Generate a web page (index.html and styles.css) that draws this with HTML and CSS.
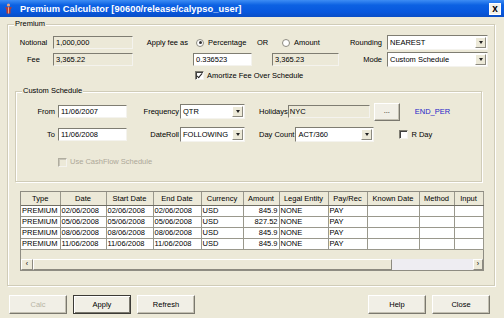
FILE: index.html
```html
<!DOCTYPE html>
<html lang="en">
<head>
    <meta charset="UTF-8">
    <title>Premium Calculator</title>
    <link rel="stylesheet" href="styles.css">
</head>
<body>
<div class="window">
    <div class="titlebar">
        <svg class="app-icon" viewBox="0 0 9 11" width="9" height="11">
            <circle cx="4.5" cy="2" r="1.6" fill="#e8a080"/>
            <path d="M1 4.2 L8 4.2 L6.5 6.5 L6.5 10.5 L2.5 10.5 L2.5 6.5 Z" fill="#c0392b"/>
            <path d="M4.5 4.2 L4.5 10.5" stroke="#f2c6a0" stroke-width="0.8"/>
        </svg>
        <span class="title">Premium Calculator [90600/release/calypso_user]</span>
        <span class="close-btn">x</span>
    </div>

    <div class="content">
        <div class="group premium">
            <div class="group-title">Premium</div>

            <div class="prem-grid">
                <span class="lbl center">Notional</span>
                <span class="field ro">1,000,000</span>
                <span class="lbl right">Apply fee as</span>
                <span class="opt pct"><span class="radio on"></span>Percentage</span>
                <span class="lbl center">OR</span>
                <span class="opt amt"><span class="radio"></span>Amount</span>
                <span class="lbl right">Rounding</span>
                <span class="combo"><span class="combo-text">NEAREST</span><span class="combo-btn"></span></span>

                <span class="lbl center">Fee</span>
                <span class="field ro">3,365.22</span>
                <span></span>
                <span class="field rate">0.336523</span>
                <span></span>
                <span class="field ro">3,365.23</span>
                <span class="lbl right">Mode</span>
                <span class="combo"><span class="combo-text">Custom Schedule</span><span class="combo-btn"></span></span>

                <span class="opt amort"><span class="check on"></span>Amortize Fee Over Schedule</span>
            </div>

            <div class="group custom">
                <div class="group-title">Custom Schedule</div>

                <div class="sched-grid">
                    <span class="lbl right">From</span>
                    <span class="field date">11/06/2007</span>
                    <span class="lbl right tight">Frequency</span>
                    <span class="combo"><span class="combo-text">QTR</span><span class="combo-btn"></span></span>
                    <span class="sched-rest">
                        <span class="lbl">Holidays</span>
                        <span class="field ro holidays">NYC</span>
                        <span class="btn small">...</span>
                        <span class="end-per">END_PER</span>
                    </span>

                    <span class="lbl right">To</span>
                    <span class="field date">11/06/2008</span>
                    <span class="lbl right tight">DateRoll</span>
                    <span class="combo"><span class="combo-text">FOLLOWING</span><span class="combo-btn"></span></span>
                    <span class="sched-rest">
                        <span class="lbl">Day Count</span>
                        <span class="combo daycount"><span class="combo-text">ACT/360</span><span class="combo-btn"></span></span>
                        <span class="opt rday"><span class="check"></span>R Day</span>
                    </span>
                </div>

                <div class="opt cashflow disabled"><span class="check"></span>Use CashFlow Schedule</div>
            </div>

            <div class="table-wrap">
                <table class="flows">
                    <colgroup>
                        <col style="width:39px"><col style="width:46px"><col style="width:47px"><col style="width:48px">
                        <col style="width:42px"><col style="width:36px"><col style="width:49px"><col style="width:39px">
                        <col style="width:52px"><col style="width:35px"><col style="width:29px">
                    </colgroup>
                    <thead>
                        <tr>
                            <th>Type</th><th>Date</th><th>Start Date</th><th>End Date</th><th>Currency</th>
                            <th>Amount</th><th>Legal Entity</th><th>Pay/Rec</th><th>Known Date</th><th>Method</th><th>Input</th>
                        </tr>
                    </thead>
                    <tbody>
                        <tr>
                            <td>PREMIUM</td><td>02/06/2008</td><td>02/06/2008</td><td>02/06/2008</td><td>USD</td>
                            <td class="num">845.9</td><td>NONE</td><td>PAY</td><td></td><td></td><td></td>
                        </tr>
                        <tr>
                            <td>PREMIUM</td><td>05/06/2008</td><td>05/06/2008</td><td>05/06/2008</td><td>USD</td>
                            <td class="num">827.52</td><td>NONE</td><td>PAY</td><td></td><td></td><td></td>
                        </tr>
                        <tr>
                            <td>PREMIUM</td><td>08/06/2008</td><td>08/06/2008</td><td>08/06/2008</td><td>USD</td>
                            <td class="num">845.9</td><td>NONE</td><td>PAY</td><td></td><td></td><td></td>
                        </tr>
                        <tr>
                            <td>PREMIUM</td><td>11/06/2008</td><td>11/06/2008</td><td>11/06/2008</td><td>USD</td>
                            <td class="num">845.9</td><td>NONE</td><td>PAY</td><td></td><td></td><td></td>
                        </tr>
                    </tbody>
                </table>
                <div class="filler"></div>
                <div class="hscroll">
                    <span class="sb-arrow">&#8249;</span>
                    <span class="sb-thumb"></span>
                    <span class="sb-track"></span>
                    <span class="sb-arrow">&#8250;</span>
                </div>
            </div>
        </div>

        <div class="buttons">
            <span class="btn disabled">Calc</span>
            <span class="btn default">Apply</span>
            <span class="btn">Refresh</span>
            <span class="spacer"></span>
            <span class="btn">Help</span>
            <span class="btn">Close</span>
        </div>
    </div>
</div>
</body>
</html>
```

FILE: styles.css
```css
* {
    box-sizing: border-box;
}
body {
    margin: 0;
    background: #ece9d8;
    font-family: "Liberation Sans", Arial, sans-serif;
    font-size: 7.5px;
    color: #000;
}
.window {
    width: 504px;
    height: 318px;
    overflow: hidden;
    background: #ece9d8;
}
.titlebar {
    height: 17px;
    display: flex;
    align-items: center;
    padding: 0 3px 0 4px;
    background: linear-gradient(#3d8df4, #0c61e2 30%, #0858de 70%, #0a4ec6);
    color: #fff;
}
.app-icon {
    margin-right: 7px;
}
.title {
    flex: 1;
    font-size: 9.3px;
    font-weight: bold;
    letter-spacing: 0.05px;
}
.close-btn {
    width: 12px;
    height: 12px;
    margin-top: 1px;
    background: #f2f1ea;
    border: 1px solid #fff;
    color: #000;
    font-weight: bold;
    font-size: 10px;
    line-height: 9px;
    text-align: center;
}
.content {
    padding: 7px 9px 0 7px;
}

/* titled groups */
.group {
    border: 1px solid #d0ccb8;
    box-shadow: inset 1px 1px 0 #fff, 1px 1px 0 #fff;
}
.group-title {
    width: fit-content;
    margin: -6px 0 0 6px;
    padding: 0 1px;
    line-height: 10px;
    background: #ece9d8;
}
.premium {
    padding-bottom: 14px;
}

/* generic widgets */
.lbl {
    white-space: nowrap;
}
.lbl.center {
    text-align: center;
}
.lbl.right {
    text-align: right;
    padding-right: 5px;
}
.field {
    height: 13px;
    padding: 0 2px;
    line-height: 11px;
    background: #fff;
    border: 1px solid;
    border-color: #7f7d72 #f4f3ee #f4f3ee #7f7d72;
    white-space: nowrap;
}
.field.ro {
    background: #ece9d8;
}
.combo {
    height: 15px;
    display: flex;
    background: #fff;
    border: 1px solid;
    border-color: #7f7d72 #f4f3ee #f4f3ee #7f7d72;
    padding: 1px;
}
.combo-text {
    flex: 1;
    padding-left: 1px;
    line-height: 11px;
    white-space: nowrap;
}
.combo-btn {
    width: 11px;
    background: #ece9d8;
    border: 1px solid;
    border-color: #fff #8c8a80 #8c8a80 #fff;
    display: flex;
    align-items: center;
    justify-content: center;
}
.combo-btn::after {
    content: "";
    border-left: 2.5px solid transparent;
    border-right: 2.5px solid transparent;
    border-top: 3px solid #222;
}
.opt {
    display: flex;
    align-items: center;
    white-space: nowrap;
}
.radio {
    width: 8px;
    height: 8px;
    margin-right: 4px;
    border: 1px solid #8d8b80;
    border-radius: 50%;
    background: #fff;
    display: flex;
    align-items: center;
    justify-content: center;
}
.radio.on::after {
    content: "";
    width: 3px;
    height: 3px;
    border-radius: 50%;
    background: #333;
}
.check {
    width: 9px;
    height: 9px;
    margin-right: 3px;
    background: #fff;
    border: 1px solid;
    border-color: #7f7d72 #f4f3ee #f4f3ee #7f7d72;
    box-shadow: inset 1px 1px 0 #404040;
    position: relative;
}
.check.on::after {
    content: "";
    position: absolute;
    left: 2px;
    top: 0px;
    width: 2px;
    height: 5px;
    border: solid #222;
    border-width: 0 1px 1px 0;
    transform: rotate(40deg);
}
.disabled {
    color: #aca899;
}
.disabled .check {
    background: #ece9d8;
    box-shadow: inset 1px 1px 0 #c8c5b8;
    border-color: #b0ad9f #f4f3ee #f4f3ee #b0ad9f;
}

/* premium rows */
.prem-grid {
    display: grid;
    grid-template-columns: 39px 80px 60px 60px 19px 67px 48px 101px;
    grid-template-rows: 15px 15px 13px;
    row-gap: 2px;
    align-items: center;
    margin-top: 6px;
    padding-left: 6px;
}
.opt.pct {
    padding-left: 3px;
}
.opt.amt {
    padding-left: 10px;
}
.field.rate {
    margin-right: 1px;
}
.opt.amort {
    grid-column: 4 / span 5;
    padding-left: 2px;
}

/* custom schedule */
.custom {
    margin: 9px 12px 0 7px;
    padding-bottom: 14px;
}
.sched-grid {
    display: grid;
    grid-template-columns: 41px 70px 53px 65px 1fr;
    grid-template-rows: 15px 15px;
    row-gap: 8px;
    align-items: center;
    margin-top: 8px;
}
.sched-grid .lbl.right {
    padding-right: 2px;
}
.sched-grid .lbl.tight {
    padding-right: 1px;
}
.field.date {
    margin-left: 1px;
}
.sched-rest {
    display: flex;
    align-items: center;
    padding-left: 14px;
}
.field.holidays {
    width: 82px;
    padding-left: 1px;
}
.btn.small {
    width: 26px;
    height: 18px;
    margin-left: 4px;
    line-height: 14px;
}
.end-per {
    margin-left: 15px;
    color: #2424c8;
}
.combo.daycount {
    width: 79px;
    margin-left: 1px;
}
.opt.rday {
    margin-left: 25px;
}
.opt.cashflow {
    margin: 15px 0 0 42px;
    line-height: 10px;
}

/* table */
.table-wrap {
    height: 80px;
    margin: 9px 10px 0 12px;
    display: flex;
    flex-direction: column;
    border: 1px solid #8e8c82;
    background: #ece9d8;
}
.flows {
    border-collapse: collapse;
    table-layout: fixed;
    width: 462px;
    background: #fff;
}
.flows th {
    height: 13px;
    padding: 0;
    font-weight: normal;
    text-align: center;
    background: #ece9d8;
    border-right: 1px solid #9a988c;
    border-bottom: 1px solid #6f6d63;
    white-space: nowrap;
    overflow: hidden;
}
.flows td {
    height: 11px;
    padding: 0 1px;
    line-height: 9px;
    border: 1px solid #9a988c;
    white-space: nowrap;
    overflow: hidden;
}
.flows td:first-child {
    border-left: none;
}
.flows td.num {
    text-align: right;
}
.filler {
    flex: 1;
}
.hscroll {
    height: 11px;
    display: flex;
}
.sb-arrow {
    width: 12px;
    background: #ece9d8;
    border: 1px solid;
    border-color: #fff #8c8a80 #8c8a80 #fff;
    font-size: 7px;
    line-height: 8px;
    text-align: center;
}
.hscroll .sb-arrow:last-child {
    width: 10px;
}
.sb-thumb {
    width: 359px;
    background: #ece9d8;
    border: 1px solid;
    border-color: #fff #8c8a80 #8c8a80 #fff;
}
.sb-track {
    flex: 1;
    background: #eeedf2;
}

/* bottom buttons */
.buttons {
    display: flex;
    gap: 6px;
    margin: 9px 5px 0 2px;
}
.spacer {
    flex: 1;
}
.btn {
    width: 58px;
    height: 19px;
    display: inline-block;
    text-align: center;
    line-height: 17px;
    background: #f1efe6;
    border: 1px solid;
    border-color: #fff #7a786e #7a786e #fff;
    box-shadow: inset -1px -1px 0 #c3c0b2;
}
.btn.default {
    border-color: #3c3b36;
    box-shadow: inset 1px 1px 0 #fff, inset -1px -1px 0 #7a786e;
}
.btn.disabled {
    color: #b8b4a4;
}
```
